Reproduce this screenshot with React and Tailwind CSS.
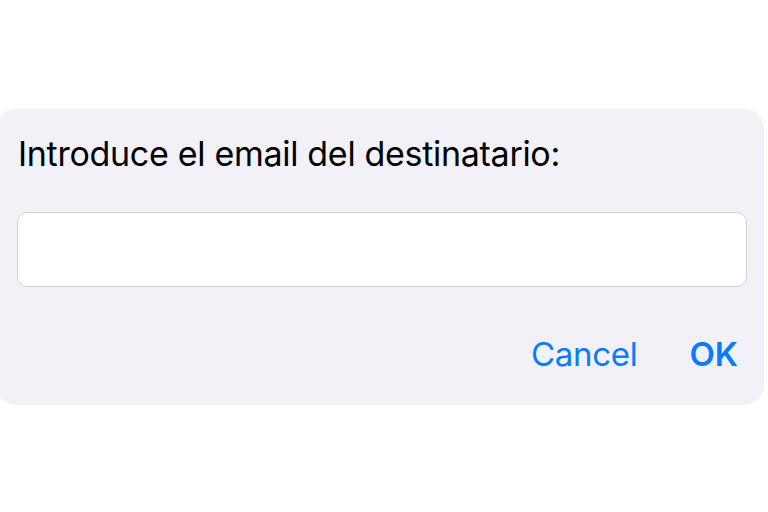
export default function App() {
  return (
    <div className="w-[768px] h-[512px] bg-white overflow-hidden" style={{ fontFamily: "Inter, 'Liberation Sans', sans-serif" }}>
      <div className="pt-[109px]">
        <div className="-ml-1 w-[768px] h-[296px] rounded-[20px] bg-[#f2f1f7] pl-[21px] pr-[22px] pt-[23px]">
          <p className="pl-[1px] text-[34px] leading-[44px] text-black tracking-[-0.3px]">Introduce el email del destinatario:</p>
          <input
            type="text"
            className="mt-[36px] w-[730px] h-[75px] rounded-[10px] border border-[#d1d1d6] bg-white outline-none"
          />
          <div className="flex justify-end items-center gap-[52px] mt-[45px] pr-[4px]">
            <button className="text-[33px] leading-[44px] tracking-[-0.3px] text-[#0a7aff]">Cancel</button>
            <button className="text-[33px] leading-[44px] font-semibold text-[#0a7aff]">OK</button>
          </div>
        </div>
      </div>
    </div>
  );
}
